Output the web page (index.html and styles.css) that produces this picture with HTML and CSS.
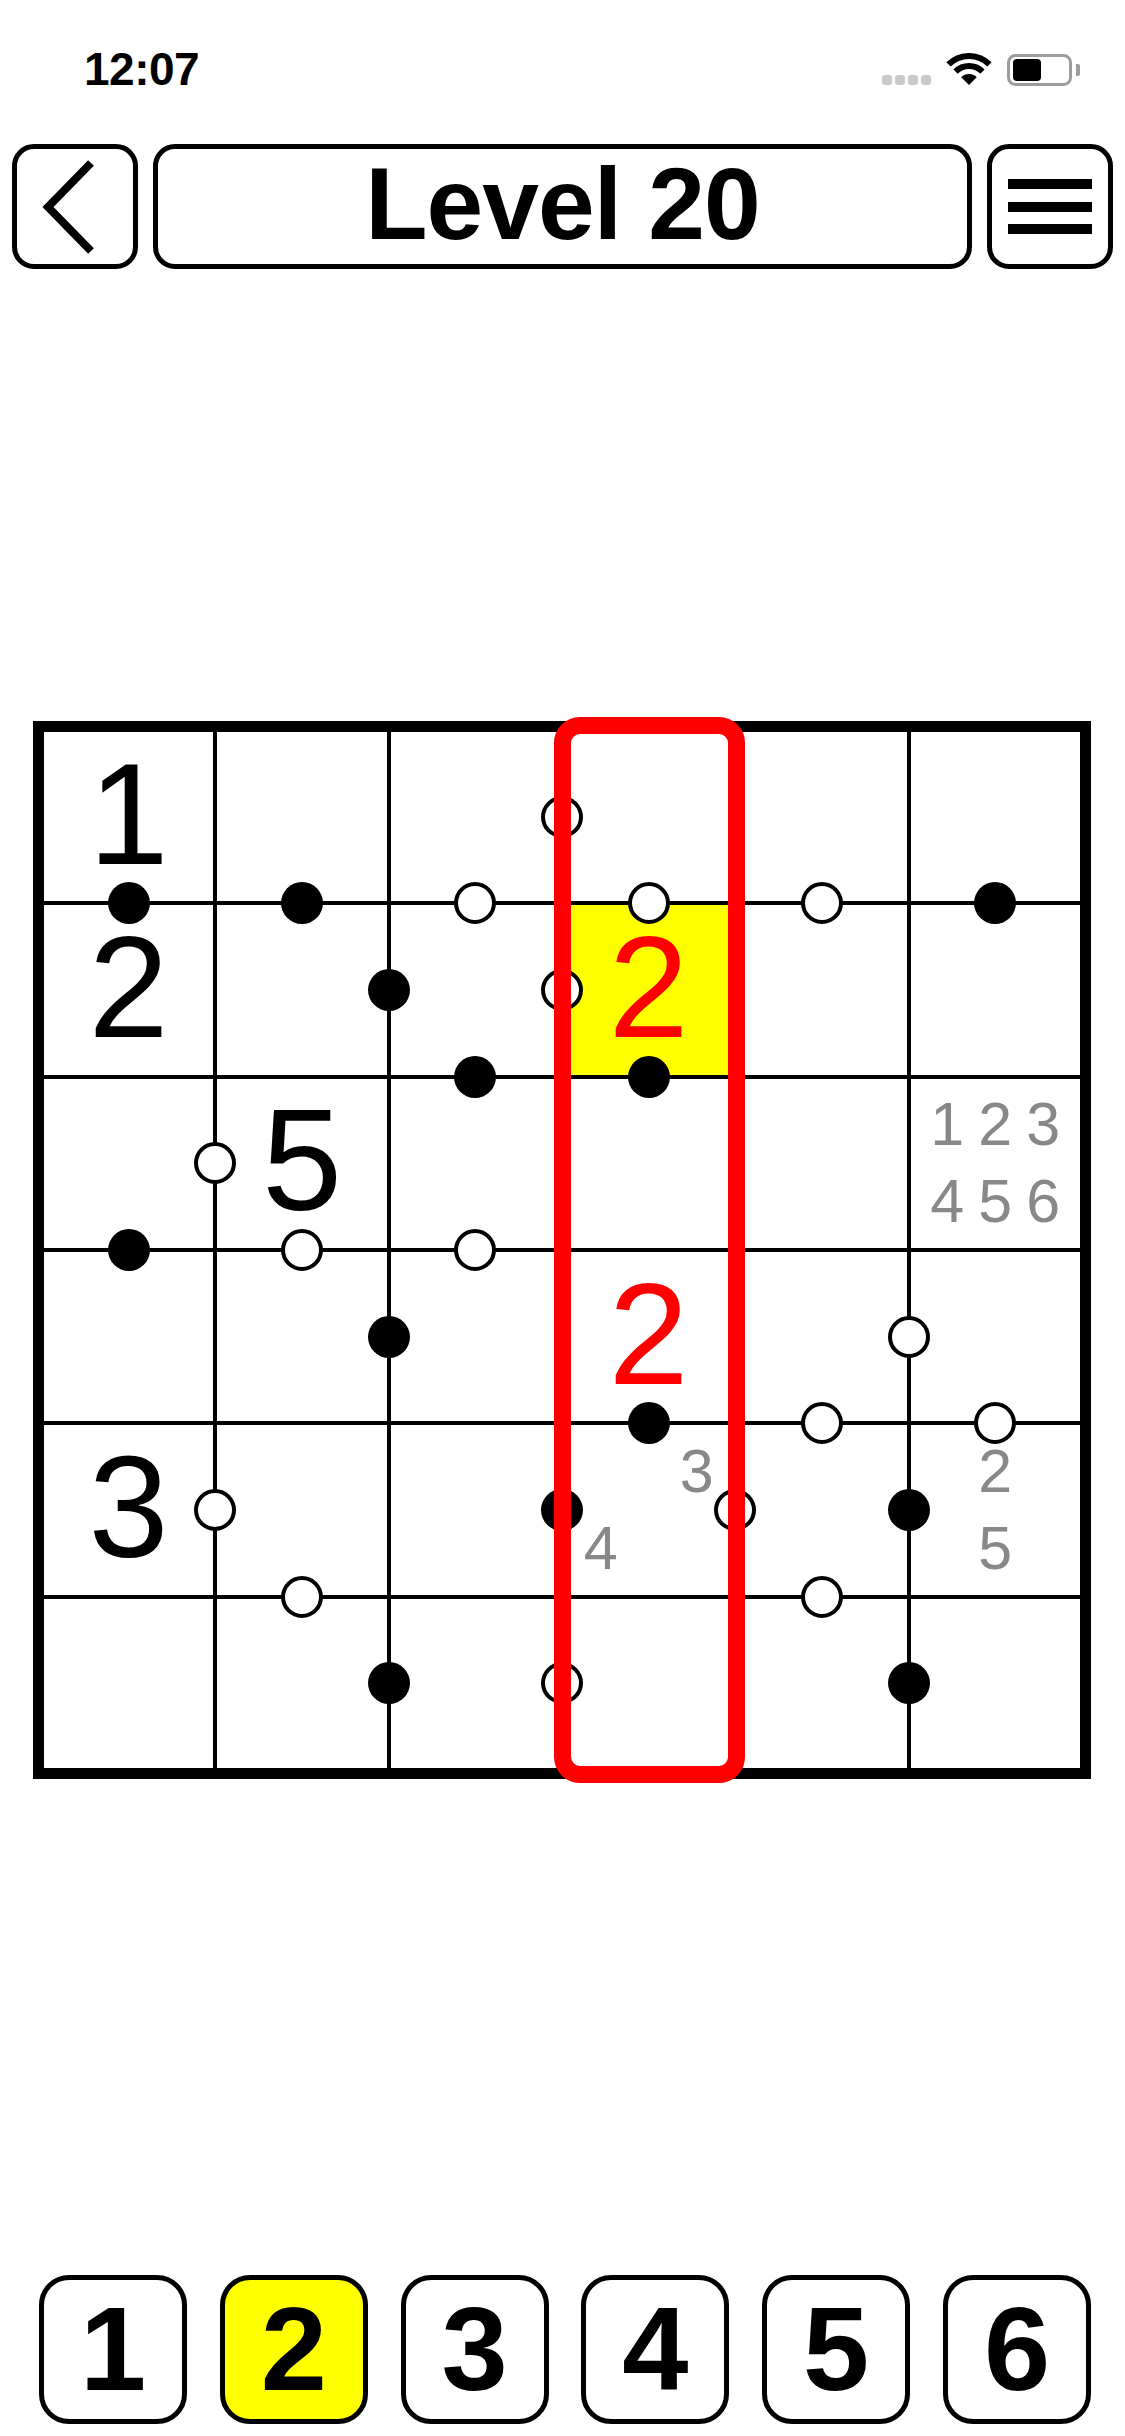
FILE: index.html
```html
<!DOCTYPE html>
<html lang="en">
<head>
<meta charset="utf-8">
<title>Level 20</title>
<link rel="stylesheet" href="styles.css">
</head>
<body>
<div class="screen">
  <header class="status">
    <div class="time">12:07</div>
    <div class="status-icons">
      <div class="signal"><span></span><span></span><span></span><span></span></div>
      <svg class="wifi" width="46" height="33" viewBox="0 0 46 33">
        <path d="M23 32 L15.22 24.22 A11 11 0 0 1 30.78 24.22 Z" fill="#000"/>
        <path d="M9.57 18.57 A19 19 0 0 1 36.43 18.57" fill="none" stroke="#000" stroke-width="6"/>
        <path d="M2.49 11.49 A29 29 0 0 1 43.51 11.49" fill="none" stroke="#000" stroke-width="6"/>
      </svg>
      <svg class="battery" width="74" height="32" viewBox="0 0 74 32">
        <rect x="1.5" y="1.5" width="62" height="29" rx="7" fill="none" stroke="#9c9c9c" stroke-width="3"/>
        <rect x="6" y="5" width="28" height="22" rx="4" fill="#000"/>
        <path d="M69 10 h2 a2 2 0 0 1 2 2 v8 a2 2 0 0 1 -2 2 h-2 Z" fill="#9c9c9c"/>
      </svg>
    </div>
  </header>

  <nav class="nav">
    <div class="nav-btn">
      <svg width="116" height="115" viewBox="0 0 116 115">
        <polyline points="74,14 31,58 74,102" fill="none" stroke="#000" stroke-width="8"/>
      </svg>
    </div>
    <div class="nav-title">Level 20</div>
    <div class="nav-btn menu">
      <span></span><span></span><span></span>
    </div>
  </nav>

  <main class="board">
    <div class="cell big">1</div>
    <div class="cell"></div>
    <div class="cell"></div>
    <div class="cell"></div>
    <div class="cell"></div>
    <div class="cell"></div>

    <div class="cell big">2</div>
    <div class="cell"></div>
    <div class="cell"></div>
    <div class="cell big red selected">2</div>
    <div class="cell"></div>
    <div class="cell"></div>

    <div class="cell"></div>
    <div class="cell big">5</div>
    <div class="cell"></div>
    <div class="cell"></div>
    <div class="cell"></div>
    <div class="cell"><div class="pencil"><span>1</span><span>2</span><span>3</span><span>4</span><span>5</span><span>6</span></div></div>

    <div class="cell"></div>
    <div class="cell"></div>
    <div class="cell"></div>
    <div class="cell big red">2</div>
    <div class="cell"></div>
    <div class="cell"></div>

    <div class="cell big">3</div>
    <div class="cell"></div>
    <div class="cell"></div>
    <div class="cell"><div class="pencil"><span></span><span></span><span>3</span><span>4</span><span></span><span></span></div></div>
    <div class="cell"></div>
    <div class="cell"><div class="pencil"><span></span><span>2</span><span></span><span></span><span>5</span><span></span></div></div>

    <div class="cell"></div>
    <div class="cell"></div>
    <div class="cell"></div>
    <div class="cell"></div>
    <div class="cell"></div>
    <div class="cell"></div>

    <div class="marks">
      <span class="dot b" style="--x:0.5;--y:1"></span>
      <span class="dot b" style="--x:1.5;--y:1"></span>
      <span class="dot w" style="--x:2.5;--y:1"></span>
      <span class="dot w" style="--x:3.5;--y:1"></span>
      <span class="dot w" style="--x:4.5;--y:1"></span>
      <span class="dot b" style="--x:5.5;--y:1"></span>
      <span class="dot w" style="--x:3;--y:0.5"></span>
      <span class="dot b" style="--x:2;--y:1.5"></span>
      <span class="dot w" style="--x:3;--y:1.5"></span>
      <span class="dot b" style="--x:2.5;--y:2"></span>
      <span class="dot b" style="--x:3.5;--y:2"></span>
      <span class="dot w" style="--x:1;--y:2.5"></span>
      <span class="dot b" style="--x:0.5;--y:3"></span>
      <span class="dot w" style="--x:1.5;--y:3"></span>
      <span class="dot w" style="--x:2.5;--y:3"></span>
      <span class="dot b" style="--x:2;--y:3.5"></span>
      <span class="dot w" style="--x:5;--y:3.5"></span>
      <span class="dot b" style="--x:3.5;--y:4"></span>
      <span class="dot w" style="--x:4.5;--y:4"></span>
      <span class="dot w" style="--x:5.5;--y:4"></span>
      <span class="dot w" style="--x:1;--y:4.5"></span>
      <span class="dot b" style="--x:3;--y:4.5"></span>
      <span class="dot w" style="--x:4;--y:4.5"></span>
      <span class="dot b" style="--x:5;--y:4.5"></span>
      <span class="dot w" style="--x:1.5;--y:5"></span>
      <span class="dot w" style="--x:4.5;--y:5"></span>
      <span class="dot b" style="--x:2;--y:5.5"></span>
      <span class="dot w" style="--x:3;--y:5.5"></span>
      <span class="dot b" style="--x:5;--y:5.5"></span>
    </div>
    <div class="focus"></div>
  </main>

  <footer class="keypad">
    <div class="key">1</div>
    <div class="key active">2</div>
    <div class="key">3</div>
    <div class="key">4</div>
    <div class="key">5</div>
    <div class="key">6</div>
  </footer>
</div>
</body>
</html>
```

FILE: styles.css
```css
* { box-sizing: border-box; }

html, body {
  margin: 0;
  padding: 0;
  background: #fff;
}

body {
  font-family: "Liberation Sans", Arial, sans-serif;
  color: #000;
}

.screen {
  width: 1125px;
  height: 2436px;
  overflow: hidden;
}

/* ---------- status bar ---------- */
.status {
  height: 144px;
  display: flex;
  justify-content: space-between;
  align-items: flex-start;
  padding: 0 44px 0 84px;
}

.time {
  padding-top: 46px;
  font-size: 46px;
  line-height: 46px;
  font-weight: 700;
  letter-spacing: -0.5px;
}

.status-icons {
  margin-top: 53px;
  height: 33px;
  display: flex;
  align-items: flex-end;
  gap: 15px;
}

.signal {
  display: flex;
  gap: 3px;
  padding-bottom: 1px;
}

.signal span {
  width: 10px;
  height: 10px;
  border-radius: 3px;
  background: #c9c9c9;
}

.wifi, .battery { display: block; }

/* ---------- nav ---------- */
.nav {
  display: flex;
  gap: 15px;
  padding: 0 12px;
  height: 125px;
}

.nav-btn {
  width: 126px;
  height: 125px;
  border: 5px solid #000;
  border-radius: 22px;
  display: flex;
  align-items: center;
  justify-content: center;
}

.nav-btn svg { display: block; }

.menu {
  flex-direction: column;
  gap: 12.5px;
}

.menu span {
  display: block;
  width: 84px;
  height: 10px;
  background: #000;
}

.nav-title {
  flex: 1;
  height: 125px;
  border: 5px solid #000;
  border-radius: 22px;
  display: flex;
  align-items: center;
  justify-content: center;
  font-size: 102px;
  font-weight: 700;
  letter-spacing: -1px;
  padding-bottom: 4px;
}

/* ---------- board ---------- */
.board {
  position: relative;
  margin: 452px 0 0 33px;
  width: 1058px;
  height: 1058px;
  border: 11px solid #000;
  background: #000;
  display: grid;
  grid-template-columns: repeat(6, 1fr);
  grid-template-rows: repeat(6, 1fr);
  gap: 4px;
}

.cell {
  background: #fff;
  display: flex;
  align-items: center;
  justify-content: center;
}

.big {
  font-size: 144px;
  line-height: 1;
  color: #000;
  padding-bottom: 4px;
}

.red { color: #ff0000; }

.selected { background: #ffff00; }

.pencil {
  display: grid;
  grid-template-columns: repeat(3, 48px);
  grid-template-rows: repeat(2, 77px);
  font-size: 61px;
  line-height: 77px;
  color: #888888;
  text-align: center;
}

.marks {
  position: absolute;
  inset: 0;
  pointer-events: none;
}

.dot {
  position: absolute;
  width: 42px;
  height: 42px;
  border-radius: 50%;
  left: calc(var(--x) * 173.333px - 23px);
  top: calc(var(--y) * 173.333px - 23px);
}

.dot.b { background: #000; }

.dot.w {
  background: #fff;
  border: 4px solid #000;
}

.focus {
  position: absolute;
  left: 510px;
  top: -15px;
  width: 191px;
  height: 1066px;
  border: 17px solid #ff0000;
  border-radius: 26px;
  pointer-events: none;
}

/* ---------- keypad ---------- */
.keypad {
  margin-top: 496px;
  display: flex;
  gap: 32.8px;
  padding-left: 39px;
}

.key {
  width: 148px;
  height: 149px;
  border: 5px solid #000;
  border-radius: 30px;
  display: flex;
  align-items: center;
  justify-content: center;
  font-size: 119px;
  font-weight: 700;
  line-height: 1;
  padding-bottom: 2px;
}

.key.active { background: #ffff00; }
```
